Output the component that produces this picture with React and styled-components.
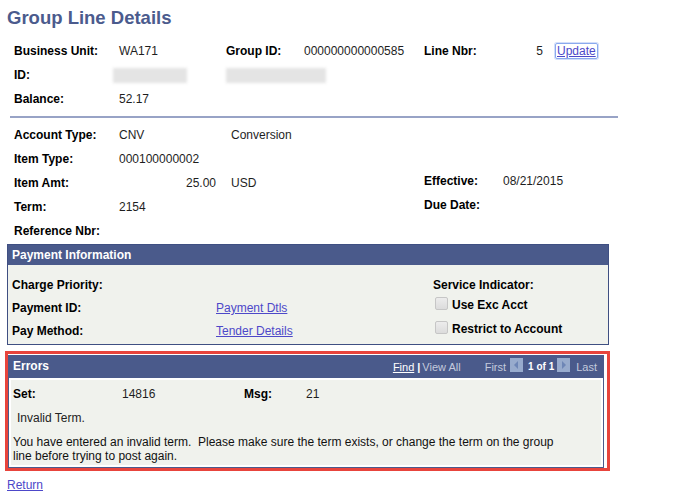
import React from 'react'
import styled, { createGlobalStyle } from 'styled-components'

const GlobalStyle = createGlobalStyle`
  body {
    margin: 0;
    background: #fff;
    font-family: "Liberation Sans", Arial, sans-serif;
    font-size: 12px;
    color: #222;
  }
`

const Page = styled.div`
  width: 691px;
  padding: 0 7px;
  box-sizing: border-box;
`

const Title = styled.h1`
  margin: 0;
  padding-top: 6px;
  font-size: 18.5px;
  line-height: 24px;
  font-weight: bold;
  color: #4b5b8d;
`

const Section = styled.div`
  padding-left: 7px;
  margin-top: ${p => p.$top}px;
`

const Row = styled.div`
  display: grid;
  grid-template-columns: ${p => p.$cols};
  height: ${p => p.$h || 24}px;
  line-height: ${p => p.$h || 24}px;
`

const Label = styled.span`
  font-weight: bold;
  color: #000;
  white-space: nowrap;
  line-height: ${p => (p.$tight ? '20px' : 'inherit')};
`

const Value = styled.span`
  color: #1e1e1e;
  white-space: nowrap;
  text-align: ${p => (p.$right ? 'right' : 'left')};
  padding-right: ${p => (p.$right ? '15px' : '0')};
  line-height: ${p => (p.$tight ? '20px' : 'inherit')};
`

const Blur = styled.span`
  align-self: center;
  grid-column: ${p => p.$col || 'auto'};
  margin-left: ${p => p.$shift || 0}px;
  width: ${p => p.$w}px;
  height: 15px;
  background: #e4e4e4;
  filter: blur(1.5px);
`

const LineNbr = styled.span`
  display: flex;
  align-items: center;
`

const NumBox = styled.span`
  width: 40px;
  text-align: right;
`

const Link = styled.a`
  color: #4d48c9;
  text-decoration: underline;
  cursor: pointer;
`

const FocusLink = styled(Link)`
  margin-left: 12px;
  line-height: 14px;
  padding: 0 1px;
  border: 1px solid #8aa9ee;
  border-radius: 2px;
  box-shadow: 0 0 0 1px #d2defa;
`

const Rule = styled.div`
  margin: 5px 0 0 3px;
  width: 608px;
  border-top: 2px solid #98a3c6;
`

const Panel = styled.div`
  margin-top: 1px;
  width: 600px;
  border: 1px solid #3f4f82;
`

const PanelHead = styled.div`
  display: flex;
  align-items: center;
  height: ${p => p.$h}px;
  line-height: ${p => p.$h}px;
  padding-left: 4px;
  background: #4a5a8b;
  color: #fff;
  font-weight: bold;
`

const PanelBody = styled.div`
  display: flex;
  background: #f0f2ed;
  padding: 9px 4px 1px 4px;
`

const LeftCol = styled.div`
  width: 421px;
`

const RightCol = styled.div`
  display: flex;
  flex-direction: column;
`

const SubHead = styled.span`
  font-weight: bold;
  color: #000;
  height: 19px;
  line-height: 23px;
`

const CheckRow = styled.label`
  display: flex;
  align-items: center;
  height: 24px;
  font-weight: bold;
  color: #000;
`

const CheckBox = styled.span`
  width: 11px;
  height: 11px;
  margin: 0 4px 3px 2px;
  border: 1px solid #c6c6c6;
  border-radius: 2px;
  background: linear-gradient(#ececec, #dcdcdc);
`

const ErrorFrame = styled.div`
  margin: 6px 0 0 -2px;
  width: 605px;
  box-sizing: border-box;
  border: 3px solid #e8443c;
  padding: 1px 3px 0 0;
  background: #fff;
`

const Grid = styled.div`
  border: 1px solid #4a5a8b;
  border-top: 0;
`

const NavBar = styled.div`
  display: flex;
  align-items: center;
  margin-left: auto;
  padding-right: 6px;
  font-weight: normal;
  font-size: 11px;
`

const NavText = styled.span`
  margin-left: ${p => p.$gap || 0}px;
  color: ${p => (p.$dim ? '#c4cadd' : '#fff')};
  font-weight: ${p => (p.$bold ? 'bold' : 'normal')};
  font-size: ${p => (p.$small ? '10px' : '11px')};
  text-decoration: ${p => (p.$under ? 'underline' : 'none')};
  line-height: 14px;
`

const NavBtn = styled.span`
  display: inline-flex;
  align-items: center;
  justify-content: center;
  margin-left: ${p => p.$gap}px;
  width: 13px;
  height: 14px;
  background: #98abcd;
  margin-top: -3px;
`

const BodyWrap = styled.div`
  padding: 2px;
`

const ErrBody = styled.div`
  background: #f0f2ed;
  padding: 2px 0 2px 2px;
`

const Indent = styled.div`
  height: 24px;
  line-height: 24px;
  padding-left: 4px;
  color: #222;
`

const Message = styled.p`
  margin: 5px 0 0;
  max-width: 560px;
  line-height: 14px;
  color: #111;
  white-space: pre-wrap;
`

const Footer = styled.div`
  margin-top: 7px;
  line-height: 14px;
`

function Arrow({ dir }) {
  const pts = dir === 'left' ? '8,3 8,11 4,7' : '5,3 5,11 9,7'
  return (
    <svg width="13" height="14" viewBox="0 0 13 14">
      <polygon points={pts} fill="#6e86b6" />
    </svg>
  )
}

const TOP = '105px 107px 78px 120px 79px 1fr'
const MID = '105px 112px 193px 79px 1fr'

export default function App() {
  return (
    <Page>
      <GlobalStyle />
      <Title>Group Line Details</Title>

      <Section $top={9}>
        <Row $cols={TOP}>
          <Label>Business Unit:</Label>
          <Value>WA171</Value>
          <Label>Group ID:</Label>
          <Value>000000000000585</Value>
          <Label>Line Nbr:</Label>
          <LineNbr>
            <NumBox>5</NumBox>
            <FocusLink>Update</FocusLink>
          </LineNbr>
        </Row>
        <Row $cols={TOP}>
          <Label>ID:</Label>
          <Blur $w={74} $shift={-6} />
          <Blur $w={100} $col="3 / span 2" />
        </Row>
        <Row $cols={TOP}>
          <Label>Balance:</Label>
          <Value>52.17</Value>
        </Row>
      </Section>

      <Rule />

      <Section $top={5}>
        <Row $cols={MID}>
          <Label>Account Type:</Label>
          <Value>CNV</Value>
          <Value>Conversion</Value>
        </Row>
        <Row $cols={MID}>
          <Label>Item Type:</Label>
          <Value>000100000002</Value>
        </Row>
        <Row $cols={MID}>
          <Label>Item Amt:</Label>
          <Value $right>25.00</Value>
          <Value>USD</Value>
          <Label $tight>Effective:</Label>
          <Value $tight>08/21/2015</Value>
        </Row>
        <Row $cols={MID}>
          <Label>Term:</Label>
          <Value>2154</Value>
          <span />
          <Label $tight>Due Date:</Label>
        </Row>
        <Row $cols={MID}>
          <Label>Reference Nbr:</Label>
        </Row>
      </Section>

      <Panel>
        <PanelHead $h={20}>Payment Information</PanelHead>
        <PanelBody>
          <LeftCol>
            <Row $cols="204px 1fr" $h={23}>
              <Label>Charge Priority:</Label>
            </Row>
            <Row $cols="204px 1fr" $h={23}>
              <Label>Payment ID:</Label>
              <span><Link>Payment Dtls</Link></span>
            </Row>
            <Row $cols="204px 1fr" $h={23}>
              <Label>Pay Method:</Label>
              <span><Link>Tender Details</Link></span>
            </Row>
          </LeftCol>
          <RightCol>
            <SubHead>Service Indicator:</SubHead>
            <CheckRow><CheckBox />Use Exc Acct</CheckRow>
            <CheckRow><CheckBox />Restrict to Account</CheckRow>
          </RightCol>
        </PanelBody>
      </Panel>

      <ErrorFrame>
        <Grid>
          <PanelHead $h={23}>
            Errors
            <NavBar>
              <NavText $under>Find</NavText>
              <NavText $gap={3} $bold>|</NavText>
              <NavText $gap={2} $dim>View All</NavText>
              <NavText $gap={24} $dim>First</NavText>
              <NavBtn $gap={4}><Arrow dir="left" /></NavBtn>
              <NavText $gap={5} $bold $small>1 of 1</NavText>
              <NavBtn $gap={3}><Arrow dir="right" /></NavBtn>
              <NavText $gap={6} $dim>Last</NavText>
            </NavBar>
          </PanelHead>
          <BodyWrap>
            <ErrBody>
              <Row $cols="109px 122px 62px 1fr">
                <Label>Set:</Label>
                <Value>14816</Value>
                <Label>Msg:</Label>
                <Value>21</Value>
              </Row>
              <Indent>Invalid Term.</Indent>
              <Message>You have entered an invalid term.  Please make sure the term exists, or change the term on the group line before trying to post again.</Message>
            </ErrBody>
          </BodyWrap>
        </Grid>
      </ErrorFrame>

      <Footer>
        <Link>Return</Link>
      </Footer>
    </Page>
  )
}
